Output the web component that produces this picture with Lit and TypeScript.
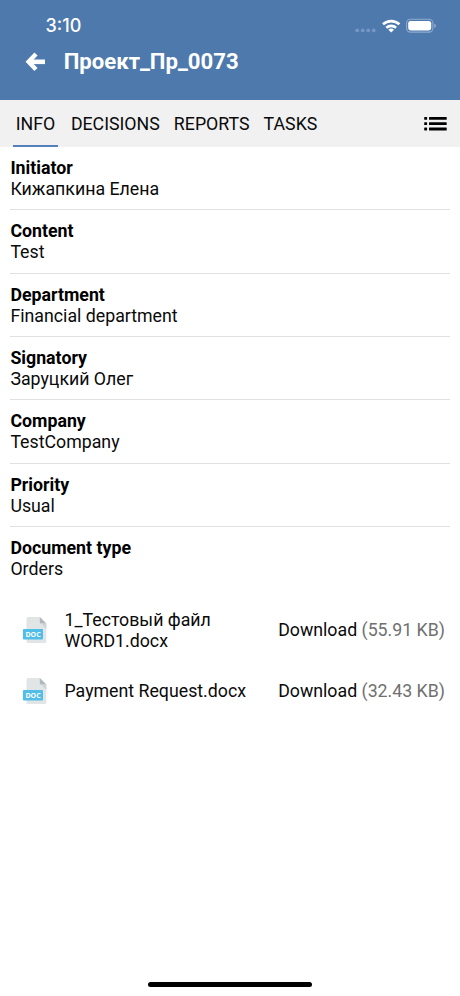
import { LitElement, html, css, svg } from "lit";
import { customElement } from "lit/decorators.js";

const tabs = ["INFO", "DECISIONS", "REPORTS", "TASKS"];

const fields = [
  ["Initiator", "Кижапкина Елена"],
  ["Content", "Test"],
  ["Department", "Financial department"],
  ["Signatory", "Заруцкий Олег"],
  ["Company", "TestCompany"],
  ["Priority", "Usual"],
  ["Document type", "Orders"],
];

const files = [
  { name: "1_Тестовый файл WORD1.docx", size: "(55.91 KB)" },
  { name: "Payment Request.docx", size: "(32.43 KB)" },
];

@customElement("app-header")
class AppHeader extends LitElement {
  static styles = css`
    :host { display: block; height: 100px; background: #4e79ad; color: #fff; }
    .status { display: flex; align-items: center; height: 51px; padding: 0 22px 0 45.5px; box-sizing: border-box; }
    .time { flex: 1; font: 500 18px/20px Inter, sans-serif; }
    .bar { display: flex; align-items: center; height: 22px; padding-left: 24px; }
    .title { margin: 0 0 1.6px 17.7px; font: 700 22.15px/26px Roboto, sans-serif; }
    svg { display: block; }
  `;
  render() {
    return html`
      <div class="status">
        <div class="time">3:10</div>
        <svg width="83" height="18" viewBox="0 0 83 18">
          <g fill="#7697c4">
            ${[2.2, 7.7, 13.2, 18.7].map((x) => svg`<circle cx=${x} cy="13.4" r="1.9" />`)}
          </g>
          <g fill="none" stroke="#fff" stroke-width="2.6">
            <path d="M28 7.3a12.2 12.2 0 0 1 16.4 0" />
            <path d="M31.3 10.8a7.2 7.2 0 0 1 9.8 0" />
          </g>
          <path d="M33.4 12.7a4.2 4.2 0 0 1 5.6 0l-2.8 2.8z" fill="#fff" />
          <rect x="51.6" y="2.3" width="26.3" height="12.8" rx="3.8" fill="none" stroke="#8facd0" stroke-width="1.1" />
          <rect x="53.2" y="3.9" width="23" height="9.6" rx="2.4" fill="#fff" />
          <path d="M79.3 6.5c2.2.8 2.2 3.6 0 4.4z" fill="#8facd0" />
        </svg>
      </div>
      <div class="bar">
        <svg width="22" height="22" viewBox="0 0 22 22" fill="none" stroke="#fff" stroke-width="4.4">
          <path d="M12 3.1 4.6 10.8 12 18.5" />
          <path d="M5 10.8H21" stroke-width="4.6" />
        </svg>
        <h1 class="title">Проект_Пр_0073</h1>
      </div>
    `;
  }
}

@customElement("tab-bar")
class TabBar extends LitElement {
  static styles = css`
    :host { display: flex; height: 47px; background: #f1f1f1; padding: 0 13px; align-items: stretch; }
    .tab { display: flex; align-items: center; box-sizing: border-box; margin-right: 9.3px; padding: 4.4px 2.4px 0; border-bottom: 2px solid transparent; font-size: 17.75px; line-height: 21px; }
    .active { border-color: #5580bd; padding-inline: 2.7px; margin-right: 10.6px; }
    .menu { margin: auto 0 auto auto; display: block; }
  `;
  render() {
    return html`
      ${tabs.map((t, i) => html`<div class="tab ${i === 0 ? "active" : ""}">${t}</div>`)}
      <svg class="menu" width="23" height="15" viewBox="0 0 23 15" fill="#000">
        ${[0.9, 6.2, 11.5].map(
          (y) => svg`<rect x="0.2" y=${y} width="2.9" height="2.9" rx=".6" /><rect x="5" y=${y} width="17.7" height="2.9" rx=".5" />`
        )}
      </svg>
    `;
  }
}

@customElement("file-row")
class FileRow extends LitElement {
  static properties = { name: {}, size: {} };
  declare name: string;
  declare size: string;
  static styles = css`
    :host { display: flex; align-items: center; padding: 0 15px 0 23px; line-height: 21px; }
    .icon { display: block; flex: none; margin: 0 17.5px 2px 0; }
    .label { font: 700 7.4px/8px "Open Sans", sans-serif; }
    .name { width: 185px; flex: none; }
    .download { margin-left: auto; white-space: nowrap; }
    .size { color: #707070; }
  `;
  render() {
    return html`
      <svg class="icon" width="24" height="28" viewBox="0 0 24 28">
        <path d="M5 1H16.8L23.3 7.5V25.5A1.5 1.5 0 0 1 21.8 27H5A1.5 1.5 0 0 1 3.5 25.5V2.5A1.5 1.5 0 0 1 5 1z" fill="#e1e5e6" />
        <path d="M16.8 1 23.3 7.5H18.3A1.5 1.5 0 0 1 16.8 6z" fill="#b0b7bd" />
        <path d="M18 7.5H23.3V12.8z" fill="#cdd3d6" />
        <rect x="0" y="13" width="20" height="10.5" rx=".8" fill="#50bee8" />
        <text class="label" x="2.4" y="20.9" textLength="15.2" lengthAdjust="spacingAndGlyphs" fill="#fff">DOC</text>
      </svg>
      <div class="name">${this.name}</div>
      <div class="download">Download <span class="size">${this.size}</span></div>
    `;
  }
}

@customElement("app-root")
class AppRoot extends LitElement {
  static styles = css`
    :host { display: flex; flex-direction: column; height: 996px; background: #fff; color: #0a0a0a; font: 17.75px/21px Roboto, sans-serif; overflow: hidden; }
    .fields { padding: 0 10px; }
    .field { box-sizing: border-box; height: 63.33px; padding: 11.1px 0 0 0.4px; border-bottom: 1px solid #e2e2e2; }
    .field:last-child { border: 0; }
    .key { font-weight: 700; color: #000; }
    .files { display: flex; flex-direction: column; gap: 25px; padding-top: 19.7px; }
    .home { width: 164px; height: 5.5px; border-radius: 3px; background: #000; margin: auto auto 9px; }
  `;
  render() {
    return html`
      <app-header></app-header>
      <tab-bar></tab-bar>
      <div class="fields">
        ${fields.map(([k, v]) => html`<div class="field"><div class="key">${k}</div><div>${v}</div></div>`)}
      </div>
      <div class="files">
        ${files.map((f) => html`<file-row .name=${f.name} .size=${f.size}></file-row>`)}
      </div>
      <div class="home"></div>
    `;
  }
}
